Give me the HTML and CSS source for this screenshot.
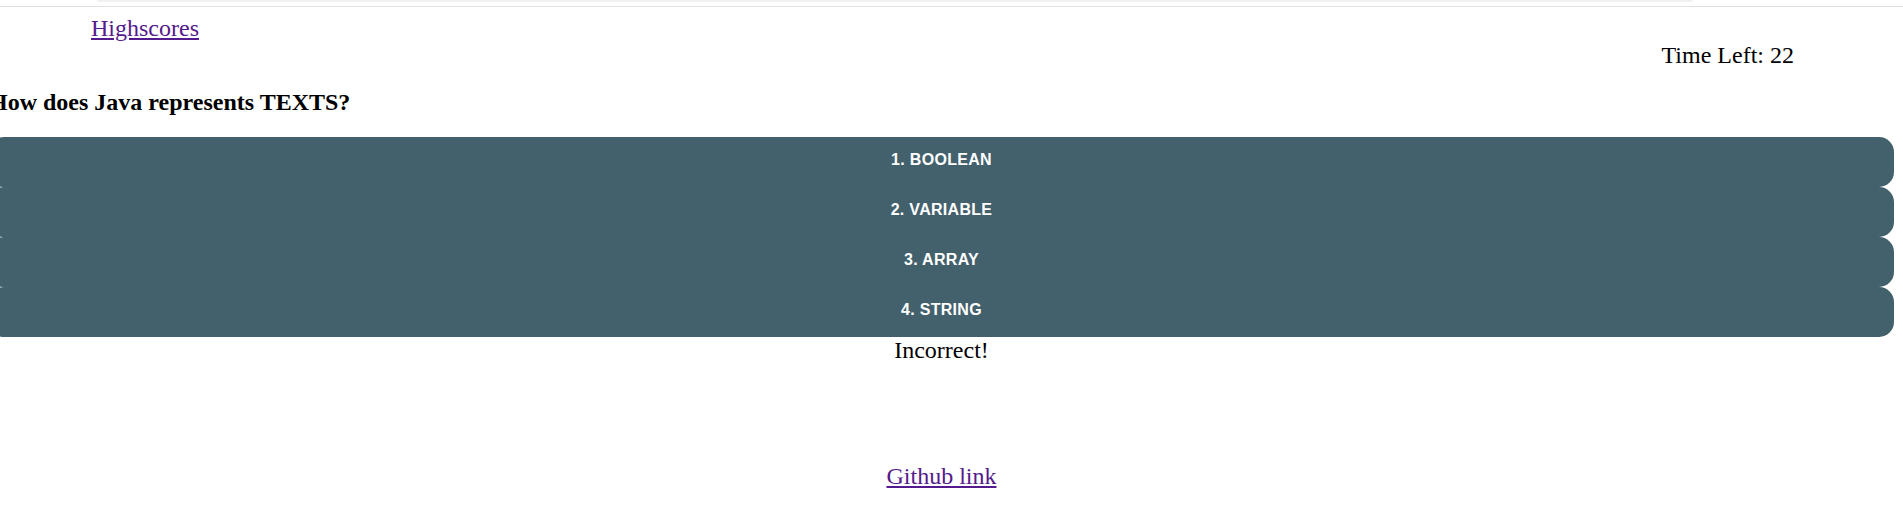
FILE: index.html
```html
<!DOCTYPE html>
<html lang="en">
<head>
<meta charset="utf-8">
<title>Code Quiz</title>
<link rel="stylesheet" href="styles.css">
</head>
<body>
<div class="topbar"></div>
<div class="divider"></div>
<header class="header">
  <a class="link" href="#">Highscores</a>
  <div class="timer">Time Left: 22</div>
</header>
<main class="quiz">
  <h4 class="question">How does Java represents TEXTS?</h4>
  <div class="answers">
    <button class="answer">1. Boolean</button>
    <button class="answer">2. Variable</button>
    <button class="answer">3. Array</button>
    <button class="answer">4. String</button>
  </div>
  <div class="result">Incorrect!</div>
</main>
<footer class="footer">
  <a class="link" href="#">Github link</a>
</footer>
</body>
</html>
```
FILE: styles.css
```css
html, body {
  margin: 0;
  padding: 0;
  background: #ffffff;
}
body {
  font-family: "Liberation Serif", "Times New Roman", serif;
  font-size: 24px;
  color: #000000;
  overflow: hidden;
}
.topbar {
  height: 2px;
  margin: 0 210px 0 97px;
  background: #f1f1f1;
  border-radius: 0 0 6px 6px;
}
.divider {
  height: 1px;
  margin-top: 4px;
  background: #e0e0e0;
}
.header {
  display: flex;
  justify-content: space-between;
  align-items: flex-start;
  padding: 0 109px 0 91px;
  margin-top: 8px;
}
.link {
  color: #551a8b;
  text-decoration: underline;
  line-height: 27px;
}
.timer {
  margin-top: 27px;
  line-height: 27px;
}
.quiz {
  margin: 0 9px 0 -11px;
}
.question {
  margin: 20px 0 21px;
  font-size: 24px;
  font-weight: bold;
  line-height: 27px;
}
.answers {
  display: flex;
  flex-direction: column;
}
.answer {
  display: block;
  width: 100%;
  height: 50px;
  margin: 0;
  padding: 14px 0 18px;
  border: none;
  border-radius: 15px;
  background: #43616d;
  color: #ffffff;
  font-family: "Liberation Sans", Arial, sans-serif;
  font-size: 16px;
  font-weight: bold;
  line-height: 18px;
  letter-spacing: 0.3px;
  text-transform: uppercase;
  text-align: center;
  box-sizing: border-box;
}
.result {
  text-align: center;
  line-height: 27px;
}
.footer {
  text-align: center;
  margin: 99px 9px 0 -11px;
}
```
